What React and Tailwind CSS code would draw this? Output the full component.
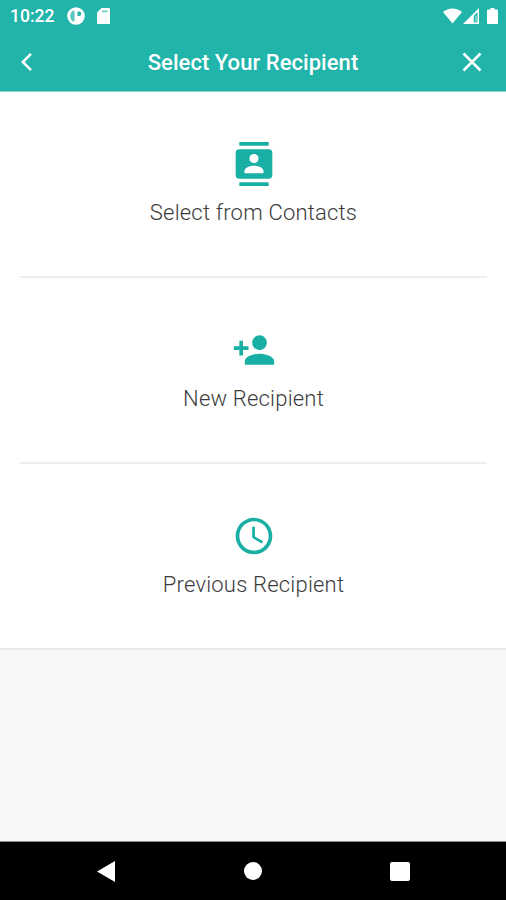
import { MdPersonAdd, MdAccessTime } from "react-icons/md";

const ContactsIcon = ({ size, className }) => (
	<svg width={size} height={size} viewBox="0 0 24 24" className={className} fill="currentColor">
		<path d="M4 0h16v2H4zM4 22h16v2H4z" />
		<path
			fillRule="evenodd"
			d="M20 4H4a2 2 0 0 0-2 2v12a2 2 0 0 0 2 2h16a2 2 0 0 0 2-2V6a2 2 0 0 0-2-2zM12 6.500a2.500 2.500 0 1 1 0 5 2.500 2.500 0 0 1 0-5zM17.200 17.100H6.800v-1.200c0-1.900 3.300-2.900 5.200-2.900s5.200 1 5.200 2.900z"
		/>
	</svg>
);

const options = [
	{ label: "Select from Contacts", Icon: ContactsIcon },
	{ label: "New Recipient", Icon: MdPersonAdd },
	{ label: "Previous Recipient", Icon: MdAccessTime },
];

const StatusBar = () => (
	<div className="flex h-8 items-center justify-between pl-2.5 pr-2 text-white">
		<div className="flex items-center">
			<span className="w-[45px] whitespace-nowrap pt-px text-[17.5px] font-medium leading-none">10:22</span>
			<svg className="ml-3 h-[18px] w-[18px]" viewBox="0 0 18 18">
				<circle cx="9" cy="9" r="8.8" fill="currentColor" />
				<path d="M5.500 3.800C2.500 6.800 2.500 11 5.500 14.200h2V3.800z" fill="#20b4aa" opacity="0.75" />
				<path d="M10.500 4.500h1.500a2.200 2.200 0 0 1 0 4.400h-1.500z" fill="#20b4aa" />
			</svg>
			<svg className="ml-3 h-4 w-[13px]" viewBox="0 0 13 16">
				<path d="M4.5 0H12a1 1 0 0 1 1 1v14a1 1 0 0 1-1 1H1a1 1 0 0 1-1-1V4.5z" fill="currentColor" />
				<path d="M5 2.500h5.500v1.800H5z" fill="#20b4aa" opacity="0.65" />
			</svg>
		</div>
		<div className="flex items-center">
			<svg className="h-4 w-[19px]" viewBox="0 0 19 16">
				<path d="M9.500 15.500L0 3.900C5.600-.8 13.400-.8 19 3.900z" fill="currentColor" />
			</svg>
			<svg className="ml-px h-4 w-4" viewBox="0 0 16 16">
				<path d="M16 0v16H0z" fill="currentColor" />
				<path d="M14.500 4v10.500h-3.700V7.700z" fill="#20b4aa" />
				<path d="M12.300 7.500h1.200v7h-1.200z" fill="currentColor" opacity="0.6" />
			</svg>
			<svg className="ml-2 h-4 w-[11px]" viewBox="0 0 11 16">
				<path d="M3.500 0h4v1.500H10a1 1 0 0 1 1 1V15a1 1 0 0 1-1 1H1a1 1 0 0 1-1-1V2.500a1 1 0 0 1 1-1h2.500z" fill="currentColor" />
			</svg>
		</div>
	</div>
);

const App = () => {
	return (
		<div className="flex h-[900px] w-[506px] flex-col overflow-hidden bg-[#f8f8f8] font-['Roboto',sans-serif]">
			{/* Header */}
			<header className="h-[92px] border-b border-[#8fd8d2] bg-[#20b4aa]">
				<StatusBar />
				<div className="flex h-[59px] items-center justify-between pl-5 pr-[23px] text-white">
					<button className="w-[25px]" aria-label="Back">
						<svg className="h-[22px] w-[14px]" viewBox="0 0 14 22">
							<path d="M11 2.800L2.800 11l8.200 8.200" fill="none" stroke="currentColor" strokeWidth="2.500" />
						</svg>
					</button>
					<h1 className="pt-0.5 text-[22px] font-medium leading-none tracking-[0.05px]">Select Your Recipient</h1>
					<button aria-label="Close">
						<svg className="h-[22px] w-[22px]" viewBox="0 0 22 22">
							<path d="M2.500 2.500l17 17M19.500 2.500l-17 17" fill="none" stroke="currentColor" strokeWidth="2.500" />
						</svg>
					</button>
				</div>
			</header>

			{/* Recipient options */}
			<main className="border-b-2 border-[#ebebeb] bg-white">
				{options.map(({ label, Icon }, index) => (
					<div key={label} className="pl-5 pr-[19px]">
						<div
							className={`flex flex-col items-center pt-[50px] ${
								index < options.length - 1 ? "h-[186px] border-b-2 border-[#ededed]" : "h-[184px]"
							}`}
						>
							<Icon size={44} className="text-[#1aafa5]" />
							<span className="mt-3 whitespace-nowrap text-[22px] font-light leading-[30px] tracking-[0.2px] text-[#3c3c3c]">
								{label}
							</span>
						</div>
					</div>
				))}
			</main>

			{/* Navigation bar */}
			<nav className="mt-auto flex h-[59px] items-center justify-between border-t border-[#8c8c8c] bg-black pl-[97px] pr-24">
				<svg className="h-[21px] w-[18px]" viewBox="0 0 18 21">
					<path d="M18 0v21L0 10.500z" fill="white" />
				</svg>
				<div className="h-[18px] w-[18px] rounded-full bg-white" />
				<div className="h-[19px] w-5 rounded-xs bg-white" />
			</nav>
		</div>
	);
};

export default App;
